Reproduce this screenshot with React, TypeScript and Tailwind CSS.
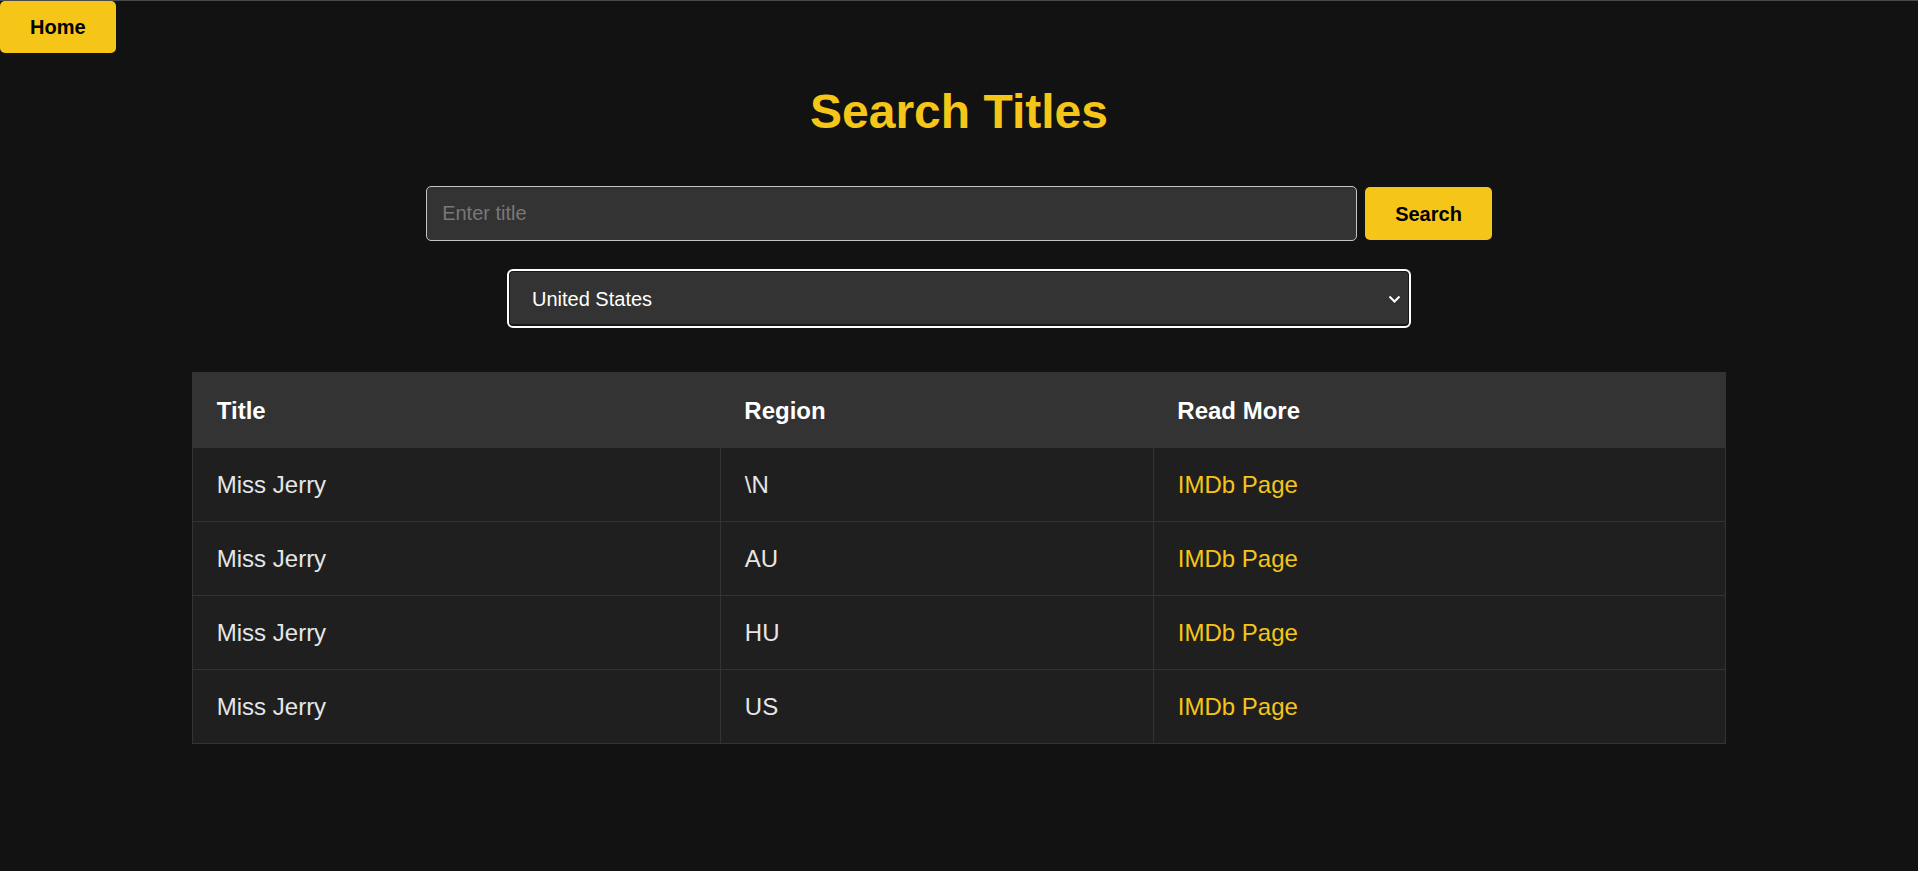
import { useState } from "react";

const rows = [
    { title: "Miss Jerry", region: "\\N" },
    { title: "Miss Jerry", region: "AU" },
    { title: "Miss Jerry", region: "HU" },
    { title: "Miss Jerry", region: "US" },
];

export default function App() {
    const [query, setQuery] = useState("");
    const [region, setRegion] = useState("US");

    return (
        <div className="min-h-screen bg-[#121212] border-t border-[#4a4a4a] font-['Liberation_Sans',Arial,sans-serif]">
            <button className="block bg-[#f5c518] text-black font-bold text-[20px] leading-[22px] px-[30px] py-[15px] rounded-[5px]">
                Home
            </button>

            <div className="flex flex-col items-center">
                <h1 className="mt-[31px] text-[48px] leading-[55px] font-bold text-[#f5c518]">Search Titles</h1>

                <div className="mt-[47px] flex items-center gap-2">
                    <input
                        value={query}
                        onChange={(e) => setQuery(e.target.value)}
                        placeholder="Enter title"
                        className="w-[931px] h-[55px] px-[15px] bg-[#333] border border-[#c4c4c4] rounded-[5px] text-[20px] text-white placeholder:text-[#787878] outline-none"
                    />
                    <button className="h-[53px] px-[30px] bg-[#f5c518] text-black font-bold text-[20px] rounded-[5px]">
                        Search
                    </button>
                </div>

                <div className="relative mt-[28px]">
                    <select
                        value={region}
                        onChange={(e) => setRegion(e.target.value)}
                        className="appearance-none w-[904px] h-[59px] pl-[23px] pr-10 bg-[#333] text-white text-[20px] border-2 border-white rounded-[6px] shadow-[inset_0_0_0_1px_#181818,inset_0_-2px_0_#181818] outline-none"
                    >
                        <option value="US">United States</option>
                        <option value="AU">Australia</option>
                        <option value="HU">Hungary</option>
                    </select>
                    {/* dropdown arrow */}
                    <svg
                        className="pointer-events-none absolute right-[10px] top-[26px]"
                        width="13"
                        height="8"
                        viewBox="0 0 13 8"
                        fill="none"
                    >
                        <path d="M1.5 1.5l5 5 5-5" stroke="white" strokeWidth="2" />
                    </svg>
                </div>

                <table className="mt-[44px] w-[80%] border-collapse border border-[#333] text-[24px]">
                    <thead>
                        <tr className="bg-[#333]">
                            <th className="w-[528px] text-left text-white font-bold px-6 pt-6 pb-[23px] leading-[27px]">Title</th>
                            <th className="w-[433px] text-left text-white font-bold px-6 pt-6 pb-[23px] leading-[27px]">Region</th>
                            <th className="text-left text-white font-bold px-6 pt-6 pb-[23px] leading-[27px]">Read More</th>
                        </tr>
                    </thead>
                    <tbody>
                        {rows.map((r, i) => (
                            <tr key={i} className="bg-[#1f1f1f]">
                                <td className="border border-[#333] px-6 py-[23px] leading-[27px] text-[#e6e6e6]">{r.title}</td>
                                <td className="border border-[#333] px-6 py-[23px] leading-[27px] text-[#e6e6e6]">{r.region}</td>
                                <td className="border border-[#333] px-6 py-[23px] leading-[27px]">
                                    <a href="#" className="text-[#f5c518]">IMDb Page</a>
                                </td>
                            </tr>
                        ))}
                    </tbody>
                </table>
            </div>
        </div>
    );
}
